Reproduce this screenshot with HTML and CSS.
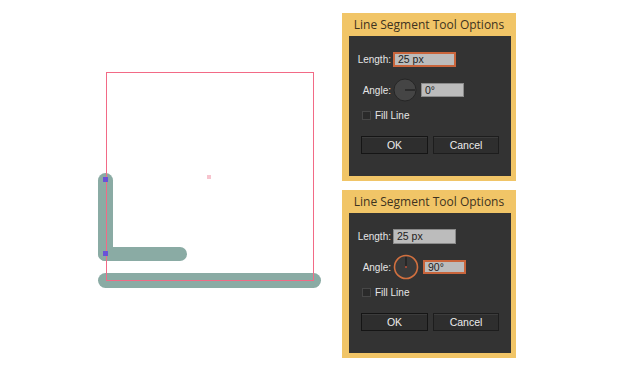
FILE: index.html
```html
<!DOCTYPE html>
<html lang="en">
<head>
  <meta charset="UTF-8">
  <meta name="viewport" content="width=device-width, initial-scale=1.0">
  <title>Line Segment Tool</title>
  <link rel="stylesheet" href="styles.css">
</head>
<body>
  <div class="page">
    <div class="canvas">
      <div class="bar bar-v"></div>
      <div class="bar bar-h"></div>
      <div class="bar bar-long"></div>
      <div class="artboard"></div>
      <div class="anchor anchor-top"></div>
      <div class="anchor anchor-bottom"></div>
      <div class="center-mark"></div>
    </div>

    <div class="dialogs">
      <div class="dialog">
        <div class="dialog-title">Line Segment Tool Options</div>
        <div class="dialog-body">
          <div class="row">
            <span class="label">Length:</span>
            <span class="field field-length active">25 px</span>
          </div>
          <div class="row row-angle">
            <span class="label">Angle:</span>
            <svg class="dial" width="24" height="24" viewBox="0 0 24 24">
              <circle cx="12" cy="12" r="11" fill="#454545" stroke="#262626" stroke-width="1"/>
              <line x1="12" y1="12" x2="22" y2="12" stroke="#1c1c1c" stroke-width="1.2"/>
            </svg>
            <span class="field field-angle">0°</span>
          </div>
          <div class="row row-check">
            <span class="check"></span>
            <span class="check-label">Fill Line</span>
          </div>
          <div class="buttons">
            <span class="btn btn-ok">OK</span>
            <span class="btn">Cancel</span>
          </div>
        </div>
      </div>

      <div class="dialog">
        <div class="dialog-title">Line Segment Tool Options</div>
        <div class="dialog-body">
          <div class="row">
            <span class="label">Length:</span>
            <span class="field field-length">25 px</span>
          </div>
          <div class="row row-angle">
            <span class="label">Angle:</span>
            <svg class="dial" width="26" height="26" viewBox="0 0 26 26">
              <circle cx="13" cy="13" r="11.5" fill="#3a3a3a" stroke="#d2703f" stroke-width="1.6"/>
              <line x1="13" y1="13" x2="13" y2="3" stroke="#1c1c1c" stroke-width="1.2"/>
              <circle cx="13" cy="13" r="1" fill="#c0503a"/>
            </svg>
            <span class="field field-angle active">90°</span>
          </div>
          <div class="row row-check">
            <span class="check"></span>
            <span class="check-label">Fill Line</span>
          </div>
          <div class="buttons">
            <span class="btn btn-ok">OK</span>
            <span class="btn">Cancel</span>
          </div>
        </div>
      </div>
    </div>
  </div>
</body>
</html>
```

FILE: styles.css
```css
body {
  margin: 0;
  padding: 0;
  background: #ffffff;
  font-family: "Liberation Sans", Arial, sans-serif;
}
.page {
  display: flex;
  width: 630px;
  height: 378px;
}
.canvas {
  position: relative;
  width: 342px;
  height: 378px;
}
.bar {
  position: absolute;
  background: #8aaba4;
  border-radius: 8px;
}
.bar-v {
  left: 98px;
  top: 173px;
  width: 15px;
  height: 88px;
}
.bar-h {
  left: 98px;
  top: 247px;
  width: 89px;
  height: 14px;
  border-radius: 7px;
}
.bar-long {
  left: 98px;
  top: 273px;
  width: 223px;
  height: 15px;
}
.artboard {
  position: absolute;
  left: 106px;
  top: 72px;
  width: 206px;
  height: 207px;
  border: 1px solid #f26a86;
}
.anchor {
  position: absolute;
  left: 103px;
  width: 5px;
  height: 5px;
  background: #6a52d8;
}
.anchor-top {
  top: 177px;
}
.anchor-bottom {
  top: 251px;
}
.center-mark {
  position: absolute;
  left: 207px;
  top: 175px;
  width: 4px;
  height: 4px;
  background: #f7c4ce;
}
.dialogs {
  display: flex;
  flex-direction: column;
  gap: 9px;
  padding-top: 13px;
}
.dialog {
  width: 174px;
  background: #f1c567;
  padding: 0 5px 5px 7px;
  box-sizing: border-box;
}
.dialog-title {
  height: 23px;
  line-height: 23px;
  text-align: center;
  font-family: "Open Sans", sans-serif;
  font-size: 12px;
  color: #3e3320;
  padding-right: 2px;
}
.dialog-body {
  background: #333333;
  height: 140px;
  padding-top: 16px;
  box-sizing: border-box;
}
.row {
  display: flex;
  align-items: center;
  padding-left: 8px;
  height: 15px;
}
.label {
  width: 34px;
  text-align: right;
  font-size: 10px;
  color: #e6e6e6;
  margin-right: 2px;
}
.field {
  box-sizing: border-box;
  background: #bcbcbc;
  color: #1e1e1e;
  font-size: 10.5px;
  height: 14px;
  line-height: 12px;
  padding-left: 3px;
  border: 1px solid #8a8a8a;
}
.field-length {
  width: 63px;
  height: 15px;
  line-height: 13px;
}
.field-angle {
  width: 43px;
  margin-left: 4px;
}
.field.active {
  border: 2px solid #c9653c;
  line-height: 11px;
}
.row-angle {
  margin-top: 10px;
  height: 26px;
}
.dial {
  display: block;
}
.row-check {
  margin-top: 7px;
  padding-left: 13px;
  height: 10px;
}
.check {
  width: 7px;
  height: 7px;
  background: #2a2a2a;
  border: 1px solid #474747;
  margin-right: 4px;
}
.check-label {
  font-size: 10px;
  color: #e6e6e6;
}
.buttons {
  display: flex;
  gap: 5px;
  padding-left: 12px;
  margin-top: 16px;
}
.btn {
  box-sizing: border-box;
  width: 66px;
  height: 18px;
  line-height: 16px;
  text-align: center;
  font-size: 10.5px;
  color: #ececec;
  background: #2e2e2e;
  border: 1px solid #1d1d1d;
  box-shadow: inset 0 1px 0 #3c3c3c;
}
.btn-ok {
  width: 67px;
  border-color: #151515;
}
```
